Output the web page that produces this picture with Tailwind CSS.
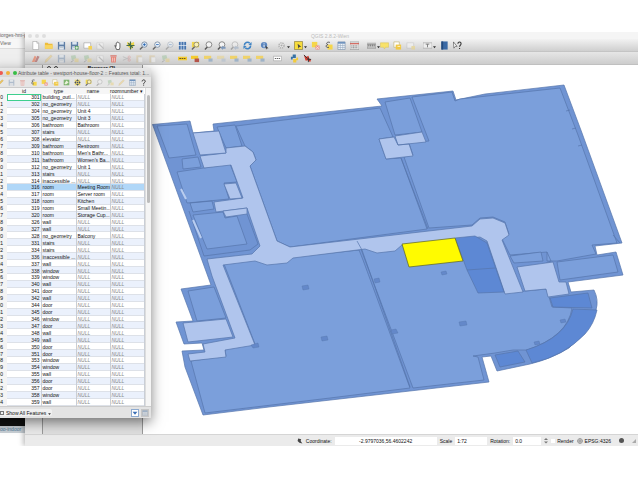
<!DOCTYPE html>
<html lang="en">
<head>
    <meta charset="UTF-8">
    <meta name="viewport" content="width=device-width, initial-scale=1.0">
    <title>QGIS - Attribute table</title>
    <script src="https://cdn.jsdelivr.net/npm/@tailwindcss/browser@4"></script>
</head>
<body class="bg-white font-['Liberation_Sans',Arial,sans-serif] text-[5px] leading-[6px] text-[#111]">

    <!-- Icon set -->
    <svg class="hidden">
        <symbol id="i-new" viewBox="0 0 10 10"><path d="M2 .5h4.500l2 2v7h-6.500z" fill="#fff" stroke="#999" stroke-width=".6"/><path d="M6.500.5v2h2" fill="#ddd" stroke="#999" stroke-width=".5"/></symbol>
        <symbol id="i-folder" viewBox="0 0 10 10"><path d="M1 2h3l1 1h4.500v5.500H1z" fill="#eebd3c"/><path d="M1 4.500h8.500v4H1z" fill="#f8d560"/></symbol>
        <symbol id="i-save" viewBox="0 0 10 10"><path d="M1 1h8v8.500H1z" fill="#5f7fa6"/><path d="M2.500 1h5v3h-5z" fill="#dce6f0"/><path d="M2.500 6h5v3.500h-5z" fill="#f2f5f8"/><path d="M3 7.500h4" stroke="#89a" stroke-width=".7"/></symbol>
        <symbol id="i-saveas" viewBox="0 0 10 10"><use href="#i-save"/><path d="M5.500 5.500h4v4h-4z" fill="#58a05c"/><path d="M6 7.500h3M7.500 6v3" stroke="#fff" stroke-width=".8"/></symbol>
        <symbol id="i-page" viewBox="0 0 10 10"><path d="M1 2h7.500v6H1z" fill="#fff" stroke="#999" stroke-width=".6"/><path d="M6 5.500h4v4H6z" fill="#f3d257"/></symbol>
        <symbol id="i-wrench" viewBox="0 0 10 10"><path d="M1 2h7v7H1z" fill="#fff" stroke="#aaa" stroke-width=".6"/><path d="M3 3l5.500 5.500" stroke="#999" stroke-width="1.400"/></symbol>
        <symbol id="i-hand" viewBox="0 0 10 10"><path d="M2 5l1.500 1V2.500l1-.5.5-1 1 .8 1 .2.7 1V7L7 9.500H4z" fill="#fff" stroke="#333" stroke-width=".8"/></symbol>
        <symbol id="i-pan" viewBox="0 0 10 10"><path d="M1 1l4 1.500L9 1v4L6 9 2 6z" fill="#ecd54c"/><path d="M5 .5v9M.5 5h9M2.500 2.500l5 5" stroke="#456c4a" stroke-width="1.300"/></symbol>
        <symbol id="i-zin" viewBox="0 0 10 10"><path d="M4 6.500L1 9.500" stroke="#666" stroke-width="1.500"/><circle cx="6" cy="4" r="3" fill="#dce9f7" stroke="#667b94" stroke-width=".8"/><path d="M4.500 4h3M6 2.500v3" stroke="#1f5fb0" stroke-width=".9"/></symbol>
        <symbol id="i-zout" viewBox="0 0 10 10"><path d="M4 6.500L1 9.500" stroke="#666" stroke-width="1.500"/><circle cx="6" cy="4" r="3" fill="#eef4fa" stroke="#667b94" stroke-width=".8"/><path d="M4.500 4h3" stroke="#1f5fb0" stroke-width=".9"/></symbol>
        <symbol id="i-full" viewBox="0 0 10 10"><path d="M1 1h8v8.500H1z" fill="#4674ae"/><path d="M3.500 0v10M6.500 0v10M0 5h10" stroke="#e8eef6" stroke-width=".8"/></symbol>
        <symbol id="i-zsel" viewBox="0 0 10 10"><path d="M1 1h8v6H1z" fill="#f2d74a"/><path d="M4 6.500L1 9.500" stroke="#666" stroke-width="1.500"/><circle cx="6" cy="4" r="2.700" fill="#fbf0b0" stroke="#777" stroke-width=".8"/></symbol>
        <symbol id="i-zlay" viewBox="0 0 10 10"><path d="M4 6.500L1 9.500" stroke="#555" stroke-width="1.500"/><circle cx="5.500" cy="4" r="3.200" fill="#f4f4f4" stroke="#666" stroke-width=".8"/></symbol>
        <symbol id="i-zlast" viewBox="0 0 10 10"><use href="#i-zlay"/><path d="M9.500 6.500H6.500V5L4 7.500 6.500 10V8.500h3z" fill="#7d98bb"/></symbol>
        <symbol id="i-refresh" viewBox="0 0 10 10"><path d="M1.500 5a3.500 3.500 0 0 1 6-2.500M8.500 5a3.500 3.500 0 0 1-6 2.500" fill="none" stroke="#3f83c4" stroke-width="1.800"/><path d="M9.500 1v3.500H6zM.5 9V5.500H4z" fill="#3f83c4"/></symbol>
        <symbol id="i-info" viewBox="0 0 10 10"><circle cx="4.500" cy="4.500" r="3.500" fill="#5b86bf"/><path d="M4.500 4v3M4.500 2v1" stroke="#fff" stroke-width="1"/><path d="M6 5l3.500 3-2 .3-.8 1.500z" fill="#444"/></symbol>
        <symbol id="i-gear" viewBox="0 0 10 10"><circle cx="5" cy="5" r="2.800" fill="#eee" stroke="#b5b5b5" stroke-width="1.800" stroke-dasharray="1.500 .8"/><circle cx="5" cy="5" r="1.200" fill="#aaa"/></symbol>
        <symbol id="i-select" viewBox="0 0 10 10"><path d="M.5.5h9v9h-9z" fill="#f7dc3c" stroke="#8b8247" stroke-width=".8"/><path d="M4 3l4 3.500-2 .2-1 1.800z" fill="#444"/></symbol>
        <symbol id="i-desel" viewBox="0 0 10 10"><path d="M1 1h6v6H1z" fill="#f5d64a"/><path d="M5 5h4.500v4.500H5z" fill="#e98d85"/><path d="M5.500 6l3.500 3M9 6l-3.500 3" stroke="#fff" stroke-width=".7"/></symbol>
        <symbol id="i-expr" viewBox="0 0 10 10"><path d="M4 4h5.500v5.500H4z" fill="#f5d64a"/><path d="M6.500 1.500C3 .5 1.500 3.500 4.500 4 1 4.500 2 8 5.500 7" fill="none" stroke="#555" stroke-width="1.100"/></symbol>
        <symbol id="i-table" viewBox="0 0 10 10"><path d="M1 1h8v8.500H1z" fill="#f0f5fa" stroke="#7890ab" stroke-width=".7"/><path d="M1 1h8v2H1z" fill="#6f93bd"/><path d="M1 5h8M1 7.200h8M3.700 3v6.500M6.400 3v6.500" stroke="#8ca2bb" stroke-width=".6"/></symbol>
        <symbol id="i-calc" viewBox="0 0 10 10"><path d="M0 1h10v8.500H0z" fill="#e7e7e7" stroke="#888" stroke-width=".6"/><path d="M0 3h10" stroke="#d1574d" stroke-width="1.200"/><path d="M1.500 5.500h7M1.500 7.500h7" stroke="#777" stroke-width="1" stroke-dasharray="1.200 .6"/></symbol>
        <symbol id="i-ruler" viewBox="0 0 10 10"><path d="M0 4h10v4H0z" fill="#c9c9c9" stroke="#777" stroke-width=".6"/><path d="M2 4v2M4 4v2M6 4v2M8 4v2" stroke="#555" stroke-width=".7"/><path d="M0 2.500h10" stroke="#777" stroke-width=".6"/></symbol>
        <symbol id="i-tip" viewBox="0 0 10 10"><path d="M.5 2h9v5H6L5 9 4 7H.5z" fill="#f8e26a" stroke="#d5bb50" stroke-width=".5"/></symbol>
        <symbol id="i-mark" viewBox="0 0 10 10"><path d="M1 1h6v6H1z" fill="#fff" stroke="#bba95b" stroke-width=".6"/><path d="M3 4h6v5.500H3z" fill="#f1c944"/><path d="M5 6h3" stroke="#fff" stroke-width=".8"/></symbol>
        <symbol id="i-text" viewBox="0 0 10 10"><path d="M0 2h10v6H0z" fill="#eee" stroke="#999" stroke-width=".6"/><path d="M3 3.500h4M5 3.500v3.500" stroke="#777" stroke-width="1"/></symbol>
        <symbol id="i-book" viewBox="0 0 10 10"><path d="M1.500.5h7v9h-7z" fill="#3a69a5"/><path d="M1.500.5h2v9h-2z" fill="#234a7c"/></symbol>
        <symbol id="i-what" viewBox="0 0 10 10"><path d="M.5 1l4 5H2.500L1 8z" fill="#fff" stroke="#333" stroke-width=".6"/><path d="M5.500 3c0-2.500 3.500-2.500 3.500 0 0 1.500-1.700 1.500-1.700 3.500M7.300 7.800V9" fill="none" stroke="#333" stroke-width="1.200"/></symbol>
        <symbol id="i-help" viewBox="0 0 10 10"><path d="M3 3.500c0-3 4.500-3 4.500 0C7.500 5 5.200 5 5.200 7M5.200 8v1.500" fill="none" stroke="#333" stroke-width="1.400"/></symbol>
        <symbol id="i-pencil" viewBox="0 0 10 10"><path d="M1 9.500l1-3L7.500 1 9 2.500 3.500 8z" fill="#f1c655" stroke="#b79a56" stroke-width=".5"/></symbol>
        <symbol id="i-edits" viewBox="0 0 10 10"><path d="M1 9l3-7 2 1-2 6z" fill="#e59a83"/><path d="M4 9l3-7 2.500 1-3 6z" fill="#b88"/></symbol>
        <symbol id="i-add" viewBox="0 0 10 10"><path d="M1 2l5-1 1 4-5 2z" fill="#8dbb8a"/><path d="M5 5h4.500v4H5z" fill="#e9cb66"/><path d="M1 9l3-2" stroke="#777" stroke-width="1"/></symbol>
        <symbol id="i-trash" viewBox="0 0 10 10"><path d="M2 3h6l-.5 6.500h-5z" fill="#e78578"/><path d="M1.500 1.500h7v1.200h-7z" fill="#d86a5e"/><path d="M4 4v4.500M6 4v4.500" stroke="#fff" stroke-width=".6"/></symbol>
        <symbol id="i-cut" viewBox="0 0 10 10"><path d="M1 3l7 3M1 7l7-3" stroke="#999" stroke-width="1"/><circle cx="8" cy="3.500" r="1.300" fill="none" stroke="#d77" stroke-width=".9"/><circle cx="8" cy="6.700" r="1.300" fill="none" stroke="#d77" stroke-width=".9"/></symbol>
        <symbol id="i-paste" viewBox="0 0 10 10"><path d="M1.500 1.500h6v8h-6z" fill="#d9bf84"/><path d="M3.500 3.500h5v6h-5z" fill="#fff" stroke="#bbb" stroke-width=".5"/></symbol>
        <symbol id="i-abc" viewBox="0 0 10 10"><path d="M0 3h10v4H0z" fill="#f4cb2f"/><path d="M1.500 5h7" stroke="#6f5c1c" stroke-width="1.200" stroke-dasharray="1.800 .7"/></symbol>
        <symbol id="i-pin" viewBox="0 0 10 10"><path d="M0 2h8v3.500H0z" fill="#f4cb2f"/><path d="M4 5h5v4H4z" fill="#b5544a"/></symbol>
        <symbol id="i-label" viewBox="0 0 10 10"><path d="M0 2h8v3.500H0z" fill="#efd26a"/><path d="M5 5h4.500v3.500H5z" fill="#9fb3c8"/></symbol>
        <symbol id="i-csw" viewBox="0 0 10 10"><path d="M.5 2.500h9v5h-9z" fill="#fff" stroke="#999" stroke-width=".6"/><path d="M2 5h6" stroke="#666" stroke-width="1.200" stroke-dasharray="1.500 .7"/></symbol>
        <symbol id="i-python" viewBox="0 0 10 10"><path d="M3 .5h3.500v4H3V6H1V3h2z" fill="#3772a5"/><path d="M7 9.500H3.500v-4H7V4h2v3H7z" fill="#f2cb3c"/></symbol>
        <symbol id="i-plug" viewBox="0 0 10 10"><path d="M1 1l3 2 2-1 1 3 2 1-1 3-3-2-2 .500-1-3z" fill="#d23c30"/><path d="M1 1l4 4M5 6h4M6 4v5" stroke="#333" stroke-width="1"/></symbol>
        <symbol id="i-inv" viewBox="0 0 10 10"><path d="M1 1h8v8H1z" fill="#7fb56f"/><path d="M2 6.500L5 2l3 3-4 3z" fill="#eaf3d9"/></symbol>
        <symbol id="i-move" viewBox="0 0 10 10"><path d="M1 1h8v8H1z" fill="#eedb6c"/><path d="M5 .5l2 2.500H3zM5 9.500L3 7h4zM.5 5L3 3v4zM9.500 5L7 7V3zM4 4h2v2H4z" fill="#47506b"/></symbol>
        <symbol id="i-caret" viewBox="0 0 4 10"><path d="M0 6h4L2 8.500z" fill="#333"/></symbol>
    </svg>

    <div class="pt-8">
        <main class="relative overflow-hidden">

            <!-- Browser window behind -->
            <section class="absolute left-0 top-0 flex h-full w-8 flex-col overflow-hidden bg-white text-[#666]">
                <div class="h-[7px] whitespace-nowrap bg-[#f3f3f3] leading-[6px]">iorges-hm-g</div>
                <div class="h-[9px] bg-[#f7f7f7] leading-[9px]">View</div>
                <div class="h-6 border-t border-[#ddd] bg-[#efefef]"></div>
                <div class="grow bg-[#e8e8e8]"></div>
                <div class="h-2 bg-[#111]"></div>
                <a href="#" class="mb-[13px] h-[7px] whitespace-nowrap bg-[#c9d0d6] text-[#4e7896]">oo-indoor</a>
            </section>

            <!-- Main QGIS window -->
            <section class="relative ml-[25px] bg-[#ececec] shadow-[-2px_0_5px_rgba(0,0,0,0.25)]">
                <header class="flex h-[7px] items-center bg-[#f5f5f5] pl-[3px] pr-6">
                    <span class="flex gap-[3px]">
                        <i class="size-1 rounded-full bg-[#dedede]"></i>
                        <i class="size-1 rounded-full bg-[#dedede]"></i>
                        <i class="size-1 rounded-full bg-[#dedede]"></i>
                    </span>
                    <h1 class="grow text-center text-[#bbb]">QGIS 2.8.2-Wien</h1>
                </header>
                <div id="toolbar-main" class="flex h-[13px] items-center border-b border-[#c4c4c4] bg-linear-to-b from-[#f2f2f2] to-[#cfcfcf] pl-[4px]"></div>
                <div id="toolbar-edit" class="flex h-[13px] items-center border-b border-[#c0c0c0] bg-linear-to-b from-[#e6e6e6] to-[#cdcdcd] pl-[4px]"></div>

                <div class="flex">
                    <div class="w-[17px] shrink-0 bg-[#e9e9e9]"></div>
                    <aside class="w-[101px] shrink-0 border-x border-[#999] bg-[#dfdfdf]">
                        <div class="flex h-[7px] items-center gap-[3px] border-b border-[#bbb] bg-[#ececec] pl-1 font-bold">
                            <i class="size-1 rounded-full border border-[#444]"></i>
                            <i class="size-1 rounded-full border border-[#444]"></i>
                            <span class="grow text-center">Browser (2)</span>
                        </div>
                    </aside>

                    <!-- Floor plan -->
                    <svg class="block h-auto min-w-0 grow bg-white" viewBox="143 65 495 369" stroke="#5676ac" stroke-width=".7" stroke-linejoin="round">
                        <path fill="#7094d3" d="M152.500 124.500L190 121l3 12 21-2-1-7L382 106l-5-7 76-8 3 9 29-6 79-9 18 48 40 110-27 3 2 9 19-3 7 23-55 7 3 10 23-2q5 10 2 20-7 20-27 38-18 11-39 16l-33 7-6-15-9 1 7 25-220 25-66 8-18-48-3-16 22-1-2-7-18 1-8-22 17-1-12-32 30-4z"/>
                        <g fill="#7b9fdb">
                            <path d="M236 126L380 108l13 29-14 2 7 20 15-1 26 71-137 18-13-6-27-75 6-6-3-8-8-6z"/>
                            <path d="M412 97l40-5 3 9 5-2 100-11 18 47 39 108-25 2 4 9-39 7h-10v-9l-37 3-8-16 7-5-4-12-12-5-13 1-8 7-43 3-25-71 9-2-4-12 20-2z"/>
                            <path d="M224 264l31-4 12 4 20-2 6-5 66-7 4 10 47 128-80 10-125 15-14-52 35-5-1-7 30-5z"/>
                            <path d="M361 249l4-1 12 4 18-2 7-6 58-6 15-1 10 8 20 48 41-4 3 8 3 10 20 1q-4 28-45 42l-14 0-18 3-22 3 5 1 6 23-71 8z"/>
                            <path d="M157 126l30-2 9 31-27 3zM182 159l16-2 3 10-18 2zM217 127l18-2 7 21-16 2z"/>
                            <path d="M177 172l53-8 7 18-13 1 5 16-42 4zM190 203l22-2 2 8-21 3zM193 215l30-3 2 6 12-2 10 28-40 5z"/>
                            <path d="M188 291l26-4 12 31-29 3zM385 102l25-4 12 34-27 3z"/>
                            <path d="M510 256l31-4 2 9-29 2zM557 262l56-7 5 17-58 8z"/>
                        </g>
                        <g fill="none">
                            <path d="M204 256l46-6 8-6-11-30M547 252l4 9-5 2M613 235l7 8M570 110l-4 1M576 128l-4 1M582 145l-4 1M204 256l-15-45"/>
                        </g>
                        <g fill="#b0c5ed">
                            <path d="M200 156l26-3V148l19-2 8 6 3 8-6 6 27 75 13 6 182-21 8-7 13-1 12 5 4 12-7 5 21 52-18 2-18-53-7-4-20 2-58 6-7 6-18 2-12-4-72 9-6 5-20 2-12-4-32 4 32 80-30 5 1 7-36 4-2-7 17-2-2-8 32-6-23-62-5-17 45-5 8-8-13-38-31 4-2-10 29-4-12-33-27 3z"/>
                            <path d="M193 133l26-2 7 22-26 2zM224 184l12-1 6 15-12 1zM223 211l24-3v6l-21 3z"/>
                            <path d="M183 323l43-4 7 18-45 5zM379 139l15-2 4 8 11-1 4 12-27 3zM395 136l27-4 4 10-28 3z"/>
                            <path d="M517 267l36-5 6 20h7l3 12-21 3-2-8-21 2z"/>
                        </g>
                        <path d="M181 189l5 10M193 220l8 18" stroke="#b9cdf0" stroke-width="2"/>
                        <path d="M357 241l5 9 48 137M401 158l27 71" fill="none"/>
                        <g fill="#5d88d4">
                            <path d="M455 238l20-2 12 7 17 49-26 1-11-23zM550 298l38-5 4 15-39-1zM495 355l23-4 7 11-25 5z"/>
                            <path d="M573 309l24 1q-3 14-12 24-21 22-53 29l-6-13q40-12 47-41z"/>
                        </g>
                        <path d="M467 270l28-2" fill="none"/>
                        <path fill="#fffb00" stroke="#5c6222" d="M402 244l53-6 8 23-54 6z"/>
                        <g fill="#6488c9" stroke-width=".4">
                            <path d="M302 286l6-1 1 4-6 1zM321 337l6-1 1 4-6 1zM374 279l5-1 1 4-5 1zM441 272l5-1 1 3-5 1z"/>
                            <path d="M391 330l5-1 2 4-6 1zM459 322l7-1 1 4-7 1zM560 320l5-1 1 3-5 1zM534 342l5-1 1 3-5 1zM251 345l7-2 1 4-6 1z"/>
                        </g>
                    </svg>
                </div>

                <footer class="flex h-[12px] items-center justify-end gap-[3px] border-t border-[#d5d5d5] bg-[#ebebeb] pr-[2px]">
                    <svg class="size-[6px]" viewBox="0 0 10 10"><path d="M2 1l5 1-1 3 3 4-5-1-3-3z" fill="#444"/></svg>
                    <label for="coord">Coordinate:</label>
                    <input id="coord" class="h-[8px] w-[102px] bg-white text-center" value="-2.9797036,56.4602242">
                    <label for="scale">Scale</label>
                    <select id="scale" class="h-[8px] w-[32px] appearance-none bg-white px-[2px]"><option>1:72</option></select>
                    <label for="rot">Rotation:</label>
                    <input id="rot" class="h-[8px] w-[28px] bg-white px-[2px]" value="0.0">
                    <svg class="h-[7px] w-[4px]" viewBox="0 0 4 7"><path d="M0 3l2-2 2 2zM0 4.500l2 2 2-2z" fill="#777"/></svg>
                    <label class="flex items-center gap-[2px]"><input type="checkbox" class="size-[4px] appearance-none bg-white">Render</label>
                    <button class="flex items-center gap-[2px]">
                        <svg class="size-[6px]" viewBox="0 0 10 10" fill="none" stroke="#666"><circle cx="5" cy="5" r="4"/><path d="M1 5h8M5 1v8"/></svg>
                        EPSG:4326
                    </button>
                    <button aria-label="Messages" class="mx-[5px] size-[5px] rounded-full bg-[#555]"></button>
                    <svg class="size-[4px]" viewBox="0 0 4 4"><path d="M0 4l4-4v4z" fill="#aaa"/></svg>
                </footer>
            </section>

            <!-- Attribute table window -->
            <section class="absolute -left-2 top-9 w-[159px] bg-[#ececec] shadow-[0_4px_12px_rgba(0,0,0,0.5)]">
                <header class="flex h-[9px] items-center gap-[1px] bg-linear-to-b from-[#e8e8e8] to-[#d6d6d6] pl-[7px]">
                    <span class="flex shrink-0 gap-[3px]">
                        <i class="size-1 rounded-full bg-[#ee5a52]"></i>
                        <i class="size-1 rounded-full bg-[#f2b13a]"></i>
                        <i class="size-1 rounded-full bg-[#37bd45]"></i>
                    </span>
                    <h2 class="whitespace-nowrap text-[#555]">Attribute table - westport-house-floor-2 :: Features total: 1...</h2>
                </header>
                <div id="toolbar-table" class="flex h-[11px] items-center border-b border-[#ccc] bg-[#e6e6e6] pl-[3px]"></div>
                <div class="flex">
                    <table class="h-[318px] w-[152px] table-fixed border-collapse bg-white">
                        <colgroup>
                            <col class="w-[15px]"><col class="w-[34px]"><col class="w-[35px]"><col class="w-[34px]"><col class="w-[34px]">
                        </colgroup>
                        <thead>
                            <tr class="bg-[#f6f6f6]">
                                <th class="p-0"></th>
                                <th class="p-0 font-normal">id</th>
                                <th class="p-0 font-normal">type</th>
                                <th class="p-0 font-normal">name</th>
                                <th class="whitespace-nowrap p-0 text-left font-normal">roomnumber ▾</th>
                            </tr>
                        </thead>
                        <tbody id="rows"></tbody>
                    </table>
                    <div class="grow border-l border-[#ddd] bg-[#f5f5f5] pt-[7px]">
                        <div class="mx-auto h-[108px] w-[3px] rounded-full bg-[#bdbdbd]"></div>
                    </div>
                </div>
                <footer class="flex h-[12px] items-center gap-[2px] border-t border-[#ccc] bg-[#e3e3e3] pl-[7px] pr-[2px]">
                    <button class="mr-auto flex items-center gap-[2px] rounded-xs bg-[#f0f0f0] px-[1px]">
                        <span class="size-[4px] border border-[#777]"></span>Show All Features
                        <svg class="h-[7px] w-[3px]"><use href="#i-caret"/></svg>
                    </button>
                    <button aria-label="Form view" class="size-[8px] border border-[#8fabd0] bg-white"><svg class="size-[6px]" viewBox="0 0 10 10"><path d="M1 3h8L5 8z" fill="#3a6eb4"/></svg></button>
                    <button aria-label="Table view" class="size-[8px] bg-[#c6c6c6] p-[1px]"><svg class="size-[6px] opacity-60"><use href="#i-table"/></svg></button>
                </footer>
            </section>
        </main>
    </div>

    <script>
        // "|" is a separator, "name-" draws the icon faded, "name+" adds a drop-down arrow
        const toolbars = {
            'toolbar-main': 'new folder save saveas page wrench- | hand pan zin zout zout- full zsel zlay zlast zlast- refresh | info | gear+ | select+ | desel expr table calc | ruler+ tip mark page- | text+ | book what',
            'toolbar-edit': 'edits pencil- save- add- add- wrench- trash cut- paste- paste- add- | abc pin label label- label label label | csw | python plug',
            'toolbar-table': 'pencil save- trash- expr desel mark inv move zsel zlay- add- pencil- table help'
        };

        function icon(token) {
            if (token === '|') return '<span class="w-[4px] shrink-0"></span>';
            const name = token.replace(/[-+]$/, '');
            const fade = token.endsWith('-') ? ' opacity-40' : '';
            const caret = token.endsWith('+') ? '<svg class="absolute -right-[2px] top-0 h-[9px] w-[3px]"><use href="#i-caret"/></svg>' : '';
            return `<button aria-label="${name}" class="relative flex w-[13px] shrink-0 justify-center"><svg class="size-[9px]${fade}"><use href="#i-${name}"/></svg>${caret}</button>`;
        }

        for (const id in toolbars) {
            let html = toolbars[id].split(' ').map(icon).join('');
            if (id === 'toolbar-table') html = html.replaceAll('w-[13px]', 'w-[11px]').replaceAll('size-[9px]', 'size-[7px]');
            document.getElementById(id).innerHTML = html;
        }

        const features = `301 building_outl...
302 no_geometry
304 no_geometry|Unit 4
305 no_geometry|Unit 3
306 bathroom|Bathroom
307 stairs
308 elevator
309 bathroom|Restroom
310 bathroom|Men's Bathr...
311 bathroom|Women's Ba...
312 no_geometry|Unit 1
313 stairs
314 inaccessible ...
316 room|Meeting Room
317 room|Server room
318 room|Kitchen
319 room|Small Meetin...
320 room|Storage Cup...
326 wall
327 wall
328 no_geometry|Balcony
331 stairs
334 stairs
336 inaccessible ...
337 wall
338 window
339 window
340 wall
341 door
342 wall
344 door
345 door
346 window
347 door
348 wall
349 wall
350 door
351 door
353 window
354 window
355 wall
356 door
357 door
358 window
359 wall`.split('\n');

        const nul = '<i class="text-[#888]">NULL</i>';
        const cell = 'overflow-hidden whitespace-nowrap border-r border-[#c9ced6] p-0 pl-[1px]';
        document.getElementById('rows').innerHTML = features.map((line, i) => {
            const [, id, type, name] = line.match(/^(\d+) ([^|]+)\|?(.*)$/);
            const bg = id === '316' ? 'bg-[#b0d7f8]' : i % 2 ? 'bg-[#ebf1fc]' : 'bg-white';
            const focus = i === 0 ? ' outline outline-[#3ecf8e] -outline-offset-1' : '';
            return `<tr class="${bg} shadow-[inset_0_-1px_0_#dde1e8]">
                <td class="bg-[#f4f4f4] p-0 pr-[4px] text-right">${i}</td>
                <td class="${cell} pr-[1px] text-right${focus}">${id}</td>
                <td class="${cell}">${type}</td>
                <td class="${cell}">${name || nul}</td>
                <td class="${cell}">${nul}</td>
            </tr>`;
        }).join('');
    </script>
</body>
</html>
